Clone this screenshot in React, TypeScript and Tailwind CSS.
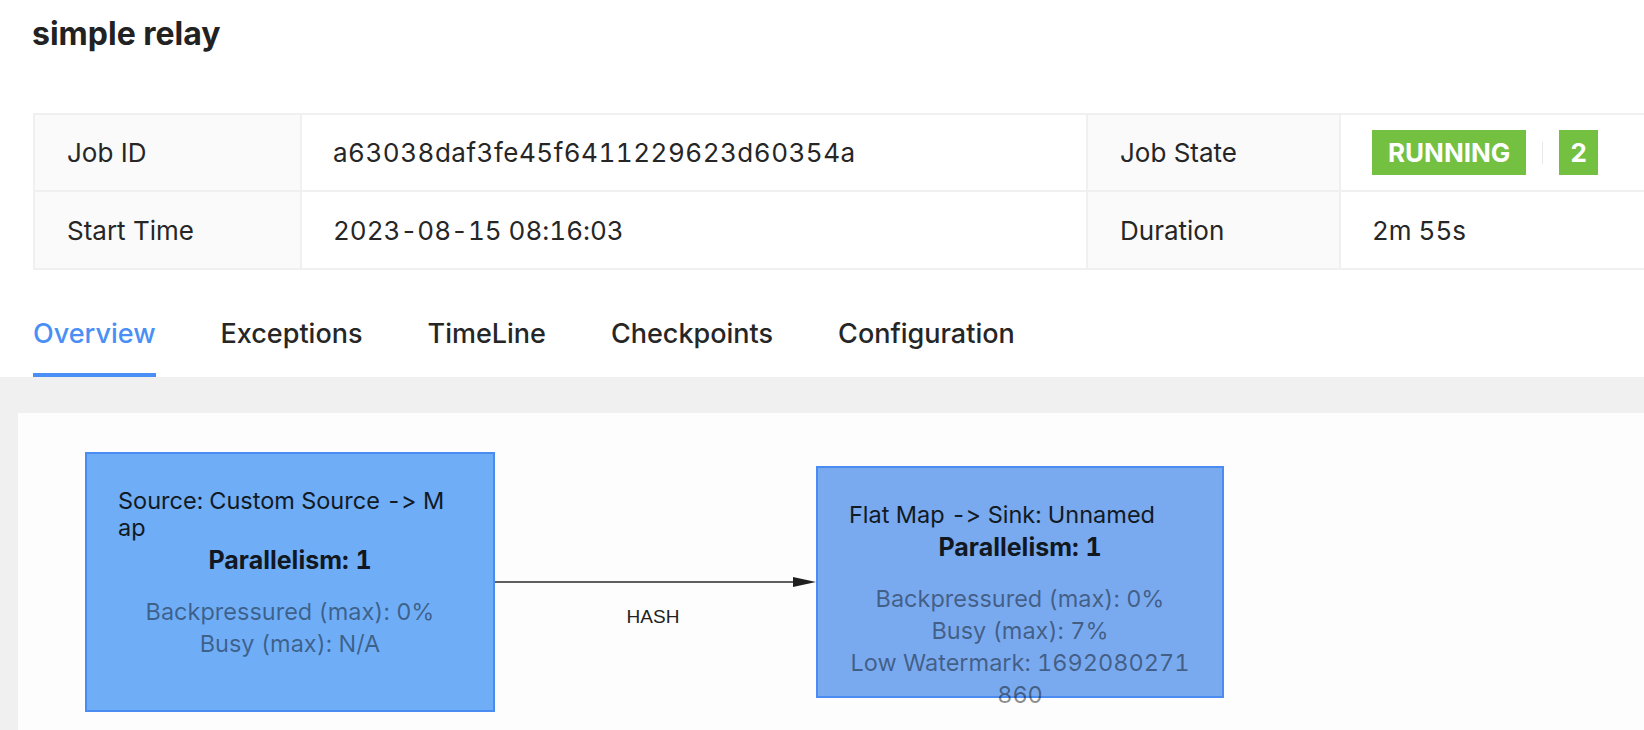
import React from "react";

const tabs = ["Overview", "Exceptions", "TimeLine", "Checkpoints", "Configuration"];

const JobNode = ({
  title,
  stats,
  width,
  height,
  fill,
}: {
  title: string[];
  stats: string[];
  width: string;
  height: string;
  fill: string;
}) => {
  return (
    <div className={`${width} ${height} ${fill} shrink-0 border-2 border-[#4b8cf3] px-[31px] pt-[33px] tabular-nums`}>
      <div className="text-[23.5px] leading-[27px] text-[#121a24]">
        {title.map((line) => (
          <div key={line} className="whitespace-nowrap">
            {line}
          </div>
        ))}
      </div>
      <div className="mt-[6px] text-center text-[25px] leading-[27px] font-bold text-[#111822]">
        Parallelism: 1
      </div>
      <div className="mt-[22px] text-center text-[23.5px] leading-[32px] text-black/45">
        {stats.map((line) => (
          <div key={line} className="whitespace-nowrap">
            {line}
          </div>
        ))}
      </div>
    </div>
  );
};

function App() {
  return (
    <div className="h-[730px] w-full overflow-hidden bg-white font-['Inter',sans-serif] text-[#262626] [font-feature-settings:'calt'_0]">
      <div className="px-[33px] pt-[14px]">
        <h1 className="-ml-[1px] h-[99px] text-[32px] leading-[40px] font-bold text-[#222]">simple relay</h1>

        <div className="grid w-[1640px] grid-cols-[265px_784px_251px_1fr] grid-rows-[75px_76px] gap-[2px] bg-[#f0f0f0] p-[2px] text-[26px]">
          <div className="flex items-center bg-[#fafafa] pl-[32px]">Job ID</div>
          <div className="flex items-center bg-white pl-[31px] tracking-[0.5px] tabular-nums">
            a63038daf3fe45f6411229623d60354a
          </div>
          <div className="flex items-center bg-[#fafafa] pl-[32px]">Job State</div>
          <div className="flex items-center bg-white pl-[31px]">
            <span className="flex h-[45px] items-center bg-[#74c142] px-[16px] font-bold text-white">RUNNING</span>
            <span className="mx-[16px] h-[22px] w-px bg-[#e8e8e8]" />
            <span className="flex h-[45px] items-center bg-[#74c142] px-[11px] font-bold text-white">2</span>
          </div>
          <div className="flex items-center bg-[#fafafa] pl-[32px]">Start Time</div>
          <div className="flex items-center bg-white pl-[31px] tabular-nums">2023-08-15 08:16:03</div>
          <div className="flex items-center bg-[#fafafa] pl-[32px]">Duration</div>
          <div className="flex items-center bg-white pl-[31px] tabular-nums">2m 55s</div>
        </div>

        <div className="mt-[46px] flex gap-[65px] text-[27px] leading-[36px] font-medium">
          {tabs.map((tab, i) => (
            <div
              key={tab}
              className={i === 0 ? "relative pb-[25px] text-[#4a8ff6]" : "relative pb-[25px] text-[#262626]"}
            >
              {tab}
              {i === 0 && <div className="absolute right-0 bottom-0 left-0 h-[4px] bg-[#4a8ff6]" />}
            </div>
          ))}
        </div>
      </div>

      <div className="h-full bg-[#f0f0f0] pt-[36px] pl-[18px]">
        <div className="h-full w-[1700px] bg-[#fdfdfd] pt-[39px] pl-[67px]">
          <div className="flex items-center">
            <JobNode
              title={["Source: Custom Source -> M", "ap"]}
              stats={["Backpressured (max): 0%", "Busy (max): N/A"]}
              width="w-[410px]"
              height="h-[260px]"
              fill="bg-[#6fadf7]"
            />

            <div className="relative h-[20px] w-[321px] shrink-0">
              <svg width="321" height="20" viewBox="0 0 321 20">
                <line x1="0" y1="10" x2="300" y2="10" stroke="#5f5f5f" strokeWidth="2" />
                <polygon points="298,5 321,10 298,15" fill="#1f1f1f" />
              </svg>
              <div className="absolute top-[35px] right-[5px] left-0 text-center font-['Liberation_Sans',sans-serif] text-[19px] leading-[20px] text-[#222]">
                HASH
              </div>
            </div>

            <JobNode
              title={["Flat Map -> Sink: Unnamed"]}
              stats={["Backpressured (max): 0%", "Busy (max): 7%", "Low Watermark: 1692080271", "860"]}
              width="w-[408px]"
              height="h-[232px]"
              fill="bg-[#79a9ee]"
            />
          </div>
        </div>
      </div>
    </div>
  );
}

export default App;
